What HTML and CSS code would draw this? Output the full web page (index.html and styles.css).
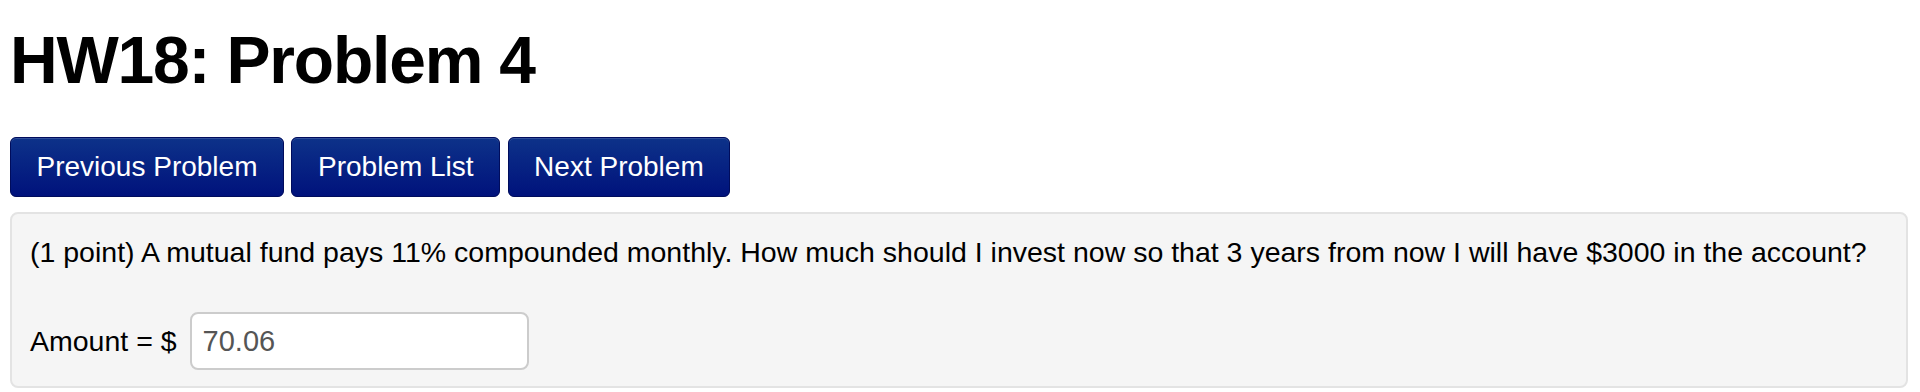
FILE: index.html
```html
<!DOCTYPE html>
<html lang="en">
<head>
    <meta charset="UTF-8">
    <title>HW18: Problem 4</title>
    <link rel="stylesheet" href="styles.css">
</head>
<body>
    <div class="page">
        <h1>HW18: Problem 4</h1>

        <div class="nav-buttons">
            <a class="btn" href="#">Previous Problem</a>
            <a class="btn" href="#">Problem List</a>
            <a class="btn" href="#">Next Problem</a>
        </div>

        <div class="problem">
            <p class="problem-text">(1 point) A mutual fund pays 11% compounded monthly. How much should I invest now so that 3 years from now I will have $3000 in the account?</p>
            <div class="answer-row">
                <label for="amount">Amount = $</label>
                <input type="text" id="amount" value="70.06">
            </div>
        </div>
    </div>
</body>
</html>
```

FILE: styles.css
```css
body {
    margin: 0;
    font-family: "Liberation Sans", Arial, Helvetica, sans-serif;
    color: #000;
    background-color: #fff;
}

.page {
    padding: 0 12px 0 10px;
}

h1 {
    margin: 24px 0 41px;
    font-size: 66px;
    line-height: 72px;
    font-weight: bold;
    letter-spacing: -1.2px;
}

.nav-buttons {
    display: flex;
    gap: 7.5px;
    margin-bottom: 15px;
}

.btn {
    display: block;
    height: 58px;
    line-height: 58px;
    padding: 0 25.5px;
    font-size: 28px;
    color: #fff;
    text-decoration: none;
    background-color: #001a80;
    background-image: linear-gradient(to bottom, #0d3289, #00127c);
    border: 1px solid #000c5c;
    border-radius: 6px;
    box-shadow: inset 0 1px 0 rgba(255,255,255,0.15);
}

.problem {
    background-color: #f5f5f5;
    border: 2px solid #e3e3e3;
    border-radius: 8px;
    padding: 18px 18px 16px;
}

.problem-text {
    margin: 0 0 40px;
    font-size: 28.5px;
    line-height: 40px;
}

.answer-row {
    display: flex;
    align-items: center;
    font-size: 28.5px;
}

.answer-row label {
    margin-right: 13px;
}

.answer-row input {
    box-sizing: border-box;
    width: 339px;
    height: 58px;
    padding: 0 11px;
    font-family: "Liberation Sans", Arial, Helvetica, sans-serif;
    font-size: 29px;
    color: #555;
    background-color: #fff;
    border: 2px solid #ccc;
    border-radius: 8px;
}
```
